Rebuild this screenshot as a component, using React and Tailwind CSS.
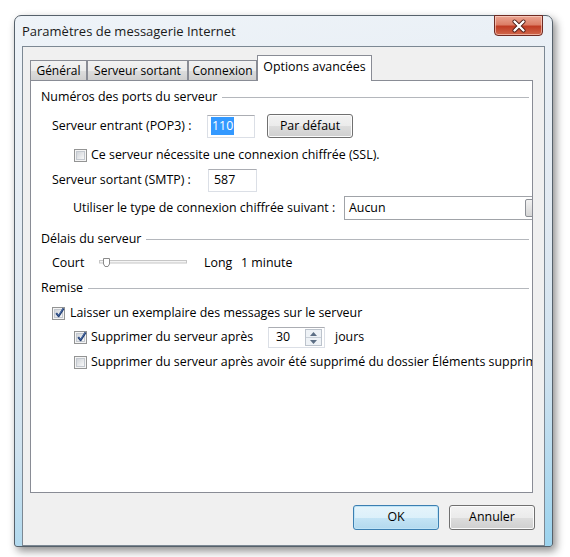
import React from "react";

const ui = "font-['Open_Sans','Noto_Sans',sans-serif] text-[12.4px] text-black";

function Checkbox({ checked }) {
  return (
    <span className="relative flex h-[13px] w-[13px] shrink-0 items-center justify-center border border-[#939494] bg-[#f4f4f4]">
      <span className="h-[9px] w-[9px] border border-[#c3c8cf] bg-[linear-gradient(135deg,#d0d4d9,#f8f8f8)]" />
      {checked && (
        <svg className="absolute -top-[2px] left-[1px]" width="12" height="13" viewBox="0 0 12 13">
          <path d="M2.2 7.2 L4.6 10.2 L9.6 2.4" fill="none" stroke="#1f3c73" strokeWidth="2" strokeLinejoin="round" />
          <path d="M2.8 7.4 L4.6 9.4 L9 2.8" fill="none" stroke="#5b7fb9" strokeWidth="0.7" />
        </svg>
      )}
    </span>
  );
}

function GroupLabel({ children }) {
  return (
    <div className="flex h-[16px] items-center pl-[10px] pr-[3px]">
      <span className="whitespace-nowrap leading-none">{children}</span>
      <span className="ml-[5px] h-px flex-1 bg-[#b4b7bc]" />
    </div>
  );
}

function Button({ children, primary, className = "" }) {
  return (
    <button
      className={
        "flex items-center justify-center rounded-[3px] border leading-none " +
        (primary
          ? "border-[#3c7fb1] bg-[linear-gradient(#e5f4fb_0%,#dcf0fa_50%,#c4e4f5_51%,#b3d9ee_100%)] shadow-[inset_0_0_0_1px_#bfe4f7] "
          : "border-[#707070] bg-[linear-gradient(#f2f2f2_0%,#ebebeb_50%,#dddddd_51%,#cfcfcf_100%)] shadow-[inset_0_0_0_1px_#fbfbfb] ") +
        className
      }
    >
      {children}
    </button>
  );
}

function TextBox({ children, className = "" }) {
  return (
    <div
      className={
        "flex items-center border border-[#dbdfe6] border-t-[#abadb3] bg-white " + className
      }
    >
      {children}
    </div>
  );
}

const tabs = [
  { label: "Général", w: "w-[57px]" },
  { label: "Serveur sortant", w: "w-[101px]" },
  { label: "Connexion", w: "w-[69px]" },
];

export default function App() {
  return (
    <div className={"h-[557px] w-[570px] overflow-hidden bg-white pl-[14px] pt-[15px] " + ui}>
      {/* window frame */}
      <div className="flex h-[532px] w-[539px] flex-col rounded-t-[7px] rounded-b-[3px] border border-[#56616b] bg-[linear-gradient(172deg,#eef3f8_0%,#e2eaf2_45%,#cfe2ef_72%,#9bd3ee_100%)] shadow-[3px_4px_9px_rgba(0,0,0,0.45)]">
        <div className="flex h-[30px] shrink-0 items-start justify-between pl-[7px] pr-[9px]">
          <span className="mt-[6px] text-[13px] leading-[18px] text-[#1a1a1a]">
            Paramètres de messagerie Internet
          </span>
          <div className="-mt-px flex h-[21px] w-[49px] items-center justify-center rounded-b-[4px] border border-[#6e2a22] bg-[linear-gradient(#eba592_0%,#dc7e67_45%,#c03c24_55%,#d0684c_100%)] shadow-[inset_0_0_0_1px_rgba(255,220,210,0.6)]">
            <svg width="16" height="14" viewBox="0 0 16 14">
              <path d="M3.5 2.5 L12.5 11.5 M12.5 2.5 L3.5 11.5" stroke="#4a1a14" strokeWidth="4" strokeLinecap="round" />
              <path d="M3.5 2.5 L12.5 11.5 M12.5 2.5 L3.5 11.5" stroke="#ffffff" strokeWidth="2.4" strokeLinecap="round" />
            </svg>
          </div>
        </div>

        {/* client area */}
        <div className="mx-[7px] flex flex-1 flex-col border border-[#7c8893] bg-[#f0f0f0] pt-[8px]">
          {/* tab strip */}
          <div className="ml-[7px] flex h-[25px] items-end text-[12px]">
            {tabs.map((t) => (
              <div
                key={t.label}
                className={
                  "flex h-[20px] items-center justify-center whitespace-nowrap border border-b-0 border-[#898c95] bg-[linear-gradient(#f2f2f2_0%,#ebebeb_50%,#dddddd_51%,#cfcfcf_100%)] leading-none " +
                  t.w
                }
              >
                {t.label}
              </div>
            ))}
            <div className="relative z-10 -mb-px flex h-[26px] w-[115px] items-start justify-center whitespace-nowrap border border-b-0 border-[#898c95] bg-white pt-[5px] text-[12.4px] leading-none">
              Options avancées
            </div>
          </div>

          {/* tab page */}
          <div className="ml-[7px] flex h-[413px] w-[503px] flex-col overflow-hidden border border-[#898c95] bg-white">
            <div className="mt-[8px]">
              <GroupLabel>Numéros des ports du serveur</GroupLabel>
            </div>

            <div className="mt-[9px] flex h-[24px] items-center pl-[21px]">
              <span className="w-[155px] whitespace-nowrap">Serveur entrant (POP3) :</span>
              <TextBox className="h-[23px] w-[48px] pl-[3px]">
                <span className="bg-[#3399ff] px-px text-white">110</span>
              </TextBox>
              <Button className="ml-[12px] h-[24px] w-[86px]">Par défaut</Button>
            </div>

            <div className="mt-[9px] flex h-[16px] items-center pl-[43px]">
              <Checkbox />
              <span className="ml-[4px] whitespace-nowrap">Ce serveur nécessite une connexion chiffrée (SSL).</span>
            </div>

            <div className="mt-[6px] flex h-[23px] items-center pl-[21px]">
              <span className="w-[156px] whitespace-nowrap">Serveur sortant (SMTP) :</span>
              <TextBox className="h-[23px] w-[49px] pl-[5px]">587</TextBox>
            </div>

            <div className="mt-[4px] flex h-[24px] items-center pl-[42px]">
              <span className="w-[271px] shrink-0 whitespace-nowrap">
                Utiliser le type de connexion chiffrée suivant :
              </span>
              <div className="flex h-[24px] w-[200px] shrink-0 items-center border border-[#a0a3a8] bg-white">
                <span className="flex-1 pl-[4px]">Aucun</span>
                <span className="mr-px h-[18px] w-[17px] rounded-[2px] border border-[#8d9096] bg-[linear-gradient(#f2f2f2,#d6d6d6)]" />
              </div>
            </div>

            <div className="mt-[11px]">
              <GroupLabel>Délais du serveur</GroupLabel>
            </div>

            <div className="mt-[8px] flex h-[16px] items-center pl-[21px]">
              <span className="w-[47px]">Court</span>
              <svg width="88" height="12" viewBox="0 0 88 12">
                <rect x="0.5" y="3.5" width="87" height="2.5" fill="#f4f4f4" stroke="#c6c6c6" />
                <path d="M4.5 1.5 H10.5 V7 L9 9.5 H6 L4.5 7 Z" fill="#ffffff" stroke="#8a8a8a" />
              </svg>
              <span className="ml-[17px] w-[37px]">Long</span>
              <span>1 minute</span>
            </div>

            <div className="mt-[9px]">
              <GroupLabel>Remise</GroupLabel>
            </div>

            <div className="mt-[9px] flex h-[16px] items-center pl-[21px]">
              <Checkbox checked />
              <span className="ml-[5px] whitespace-nowrap">Laisser un exemplaire des messages sur le serveur</span>
            </div>

            <div className="mt-[6px] flex h-[21px] items-center pl-[43px]">
              <Checkbox checked />
              <span className="ml-[4px] w-[177px] whitespace-nowrap">Supprimer du serveur après</span>
              <TextBox className="h-[21px] w-[57px] justify-between pl-[7px] pr-[2px]">
                <span>30</span>
                <span className="flex h-[17px] w-[17px] flex-col border border-[#bcc3cc] bg-[#eef2f6]">
                  <span className="flex flex-1 items-center justify-center border-b border-[#c9d0d8]">
                    <svg width="7" height="4" viewBox="0 0 7 4"><path d="M0 4 L3.5 0 L7 4 Z" fill="#5c6e84" /></svg>
                  </span>
                  <span className="flex flex-1 items-center justify-center">
                    <svg width="7" height="4" viewBox="0 0 7 4"><path d="M0 0 L3.5 4 L7 0 Z" fill="#5c6e84" /></svg>
                  </span>
                </span>
              </TextBox>
              <span className="ml-[10px]">jours</span>
            </div>

            <div className="mt-[6px] flex h-[16px] items-center pl-[43px]">
              <Checkbox />
              <span className="ml-[4px] whitespace-nowrap">
                Supprimer du serveur après avoir été supprimé du dossier Éléments supprimés
              </span>
            </div>
          </div>

          {/* dialog buttons */}
          <div className="mt-[12px] flex justify-end gap-[10px] pr-[9px]">
            <Button primary className="h-[25px] w-[86px]">OK</Button>
            <Button className="h-[25px] w-[86px]">Annuler</Button>
          </div>
        </div>
      </div>
    </div>
  );
}
